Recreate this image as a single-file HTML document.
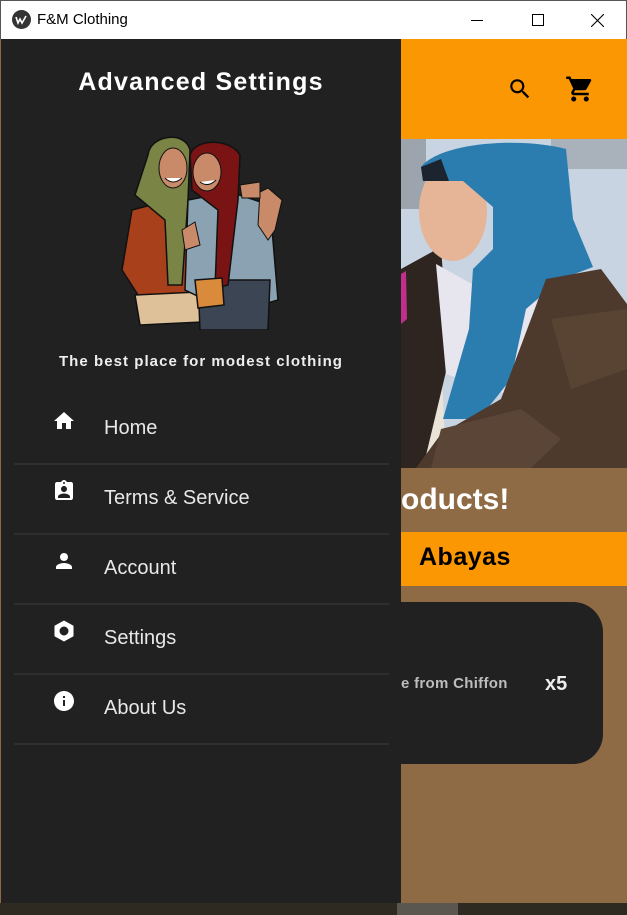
<!DOCTYPE html>
<html><head><meta charset="utf-8"><style>
*{margin:0;padding:0;box-sizing:border-box}
body{width:627px;height:915px;overflow:hidden;background:#8f6b45;font-family:"Liberation Sans",sans-serif;position:relative}
.tb{position:absolute;left:0;top:0;width:627px;height:39px;background:#fff;border:1px solid #555;border-bottom:none}
.tb .t{position:absolute;left:36px;top:10px;font-size:15px;color:#000}
.ab{position:absolute}
.drawer{position:absolute;left:1px;top:39px;width:400px;height:864px;background:#212121}
.item{position:absolute;left:13px;width:375px;height:70px;border-bottom:2px solid #2e2e2e}
.item .tx{position:absolute;left:90px;top:22px;font-size:20px;color:#e8e8e8}
.item svg{position:absolute;left:38px;top:14px}
</style></head><body>
<div class="tb">
 <svg class="ab" style="left:11px;top:9px" width="19" height="19" viewBox="0 0 19 19"><circle cx="9.5" cy="9.5" r="9.5" fill="#333"/><path d="M4 7l2 6 2-4 2 4 4-7" stroke="#fff" stroke-width="1.6" fill="none"/></svg>
 <div class="t">F&amp;M Clothing</div>
 <div class="ab" style="left:470px;top:19px;width:12px;height:1px;background:#000"></div>
 <div class="ab" style="left:531px;top:13px;width:12px;height:12px;border:1px solid #000"></div>
 <svg class="ab" style="left:590px;top:13px" width="13" height="13"><path d="M0 0L13 13M13 0L0 13" stroke="#000" stroke-width="1.1"/></svg>
</div>
<div class="ab" style="left:401px;top:39px;width:226px;height:100px;background:#fb9702"></div>
<svg class="ab" style="left:507px;top:76px" width="26" height="26" viewBox="0 0 24 24"><path d="M15.5 14h-.79l-.28-.27A6.47 6.47 0 0016 9.5 6.5 6.5 0 109.5 16c1.61 0 3.09-.59 4.23-1.57l.27.28v.79l5 4.99L20.49 19l-4.99-5zm-6 0C7.01 14 5 11.990 5 9.5S7.01 5 9.5 5 14 7.01 14 9.5 11.99 14 9.5 14z"/></svg>
<svg class="ab" style="left:565px;top:74px" width="30" height="30" viewBox="0 0 24 24"><path d="M7 18c-1.1 0-1.99.9-1.99 2S5.9 22 7 22s2-.9 2-2-.9-2-2-2zM1 2v2h2l3.6 7.59-1.35 2.450c-.16.28-.25.61-.25.96 0 1.1.9 2 2 2h12v-2H7.42c-.14 0-.25-.11-.25-.25l.03-.12.9-1.63h7.45c.75 0 1.41-.41 1.75-1.03l3.58-6.49A1 1 0 0020 4H5.21l-.94-2H1zm16 16c-1.1 0-1.99.9-1.99 2s.89 2 1.99 2 2-.9 2-2-.9-2-2-2z"/></svg>
<svg class="ab" style="left:401px;top:139px" width="226" height="329" viewBox="0 0 226 329">
 <rect width="226" height="329" fill="#c9d4e2"/>
 <rect x="150" y="0" width="76" height="30" fill="#8a8f92" opacity=".5"/>
 <rect x="0" y="0" width="25" height="70" fill="#6f7478" opacity=".5"/>
 <path d="M0 200L40 215L45 329L0 329Z" fill="#e9e3d8"/>
 <path d="M0 130L40 108L48 220L22 329L0 329Z" fill="#2e2420"/>
 <path d="M0 135L5 132L6 180L0 185Z" fill="#c0308a"/>
 <path d="M35 125L80 150L135 160L140 175L105 255L45 235Z" fill="#e7e5ee"/>
 <ellipse cx="52" cy="72" rx="34" ry="50" fill="#e6b497"/>
 <path d="M20 28C40 3 120 -2 165 10L172 80L192 128L160 140L125 170L110 240L78 280L42 280L68 190L72 130L92 110L92 68L62 42L22 42Z" fill="#2b7db0"/>
 <path d="M20 28L40 20L48 42L22 42Z" fill="#1c2430"/>
 <path d="M100 260L145 140L200 130L226 165L226 329L15 329L40 295Z" fill="#4d3a2d"/>
 <path d="M150 180L226 170L226 230L170 250Z" fill="#5e4838" opacity=".7"/>
 <path d="M40 290L120 270L160 300L130 329L30 329Z" fill="#5a4536"/>
</svg>
<div class="ab" style="left:401px;top:483px;font-size:30px;font-weight:bold;color:#fff">oducts!</div>
<div class="ab" style="left:401px;top:532px;width:226px;height:54px;background:#fb9702"></div>
<div class="ab" style="left:419px;top:543px;font-size:25px;font-weight:bold;color:#000;letter-spacing:0.5px">Abayas</div>
<div class="ab" style="left:360px;top:602px;width:243px;height:162px;background:#212121;border-radius:30px"></div>
<div class="ab" style="left:401px;top:675px;font-size:15px;font-weight:bold;color:#bdbdbd;letter-spacing:0.3px">e from Chiffon</div>
<div class="ab" style="left:545px;top:673px;font-size:20px;font-weight:bold;color:#eee">x5</div>
<div class="ab" style="left:0;top:903px;width:627px;height:12px;background:#2e2a22"></div>
<div class="ab" style="left:397px;top:903px;width:61px;height:12px;background:#5a5650"></div>
<div class="drawer">
 <div class="ab" style="left:0;width:400px;top:29px;text-align:center;font-size:25px;font-weight:bold;color:#fff;letter-spacing:1.2px">Advanced Settings</div>
 <svg class="ab" style="left:109px;top:91px" width="180" height="200" viewBox="0 0 180 200">
  <path d="M22 80L60 70L85 80L90 165L30 168L12 140Z" fill="#a8401c" stroke="#111" stroke-width="1.5"/>
  <path d="M25 165L88 162L92 192L30 195Z" fill="#dfc199" stroke="#111" stroke-width="1.5"/>
  <path d="M38 25C40 5 75 0 80 20L78 70L72 155L58 155L55 90L25 65Z" fill="#7a8445" stroke="#111" stroke-width="1.5"/>
  <ellipse cx="63" cy="38" rx="14" ry="20" fill="#c98a6a" stroke="#111"/>
  <path d="M55 48Q63 56 72 48" fill="#fff" stroke="#111"/>
  <path d="M78 70L120 62L160 75L168 170L140 178L100 172L75 160Z" fill="#8aa2b2" stroke="#111" stroke-width="1.5"/>
  <path d="M88 150L160 150L158 200L90 200Z" fill="#3c4554" stroke="#111" stroke-width="1.5"/>
  <path d="M80 25C85 8 120 8 130 25L128 70L118 155L105 158L108 80L82 60Z" fill="#7a1414" stroke="#111" stroke-width="1.5"/>
  <ellipse cx="97" cy="42" rx="14" ry="19" fill="#c98a6a" stroke="#111"/>
  <path d="M90 52Q98 58 106 50" fill="#fff" stroke="#111"/>
  <path d="M85 150L112 148L114 175L88 178Z" fill="#d98a3a" stroke="#111" stroke-width="1.5"/>
  <path d="M148 95L150 62L158 58L172 70L165 100L158 110Z" fill="#c98a6a" stroke="#111"/>
  <path d="M72 100L85 92L90 115L75 120Z" fill="#c98a6a" stroke="#111"/>
  <path d="M130 55L150 52L150 68L132 68Z" fill="#c98a6a" stroke="#111"/>
 </svg>
 <div class="ab" style="left:0;width:400px;top:314px;text-align:center;font-size:15px;font-weight:bold;color:#eee;letter-spacing:1.05px">The best place for modest clothing</div>
 <div class="item" style="top:356px"><svg width="24" height="24" viewBox="0 0 24 24"><path fill="#fff" d="M10 20v-6h4v6h5v-8h3L12 3 2 12h3v8z"/></svg><div class="tx">Home</div></div>
 <div class="item" style="top:426px"><svg width="24" height="24" viewBox="0 0 24 24"><path fill="#fff" d="M19 3h-4.18C14.4 1.84 13.3 1 12 1s-2.4.84-2.82 2H5c-1.1 0-2 .9-2 2v14c0 1.1.9 2 2 2h14c1.1 0 2-.9 2-2V5c0-1.1-.9-2-2-2zm-7 0c.55 0 1 .45 1 1s-.45 1-1 1-1-.45-1-1 .45-1 1-1zm0 4c1.66 0 3 1.34 3 3s-1.34 3-3 3-3-1.34-3-3 1.34-3 3-3zm6 12H6v-1.4c0-2 4-3.1 6-3.1s6 1.1 6 3.1V19z"/></svg><div class="tx">Terms &amp; Service</div></div>
 <div class="item" style="top:496px"><svg width="24" height="24" viewBox="0 0 24 24"><path fill="#fff" d="M12 12c2.21 0 4-1.79 4-4s-1.79-4-4-4-4 1.79-4 4 1.79 4 4 4zm0 2c-2.67 0-8 1.34-8 4v2h16v-2c0-2.66-5.33-4-8-4z"/></svg><div class="tx">Account</div></div>
 <div class="item" style="top:566px"><svg width="24" height="24" viewBox="0 0 24 24"><path fill="#fff" fill-rule="evenodd" d="M12 1.5l9.5 5.25v10.5L12 22.5l-9.5-5.25V6.75zM12 7.5a4.5 4.5 0 100 9 4.5 4.5 0 000-9z"/></svg><div class="tx">Settings</div></div>
 <div class="item" style="top:636px"><svg width="24" height="24" viewBox="0 0 24 24"><path fill="#fff" d="M12 2C6.48 2 2 6.48 2 12s4.48 10 10 10 10-4.48 10-10S17.52 2 12 2zm1 15h-2v-6h2v6zm0-8h-2V7h2v2z"/></svg><div class="tx">About Us</div></div>
</div>
</body></html>
